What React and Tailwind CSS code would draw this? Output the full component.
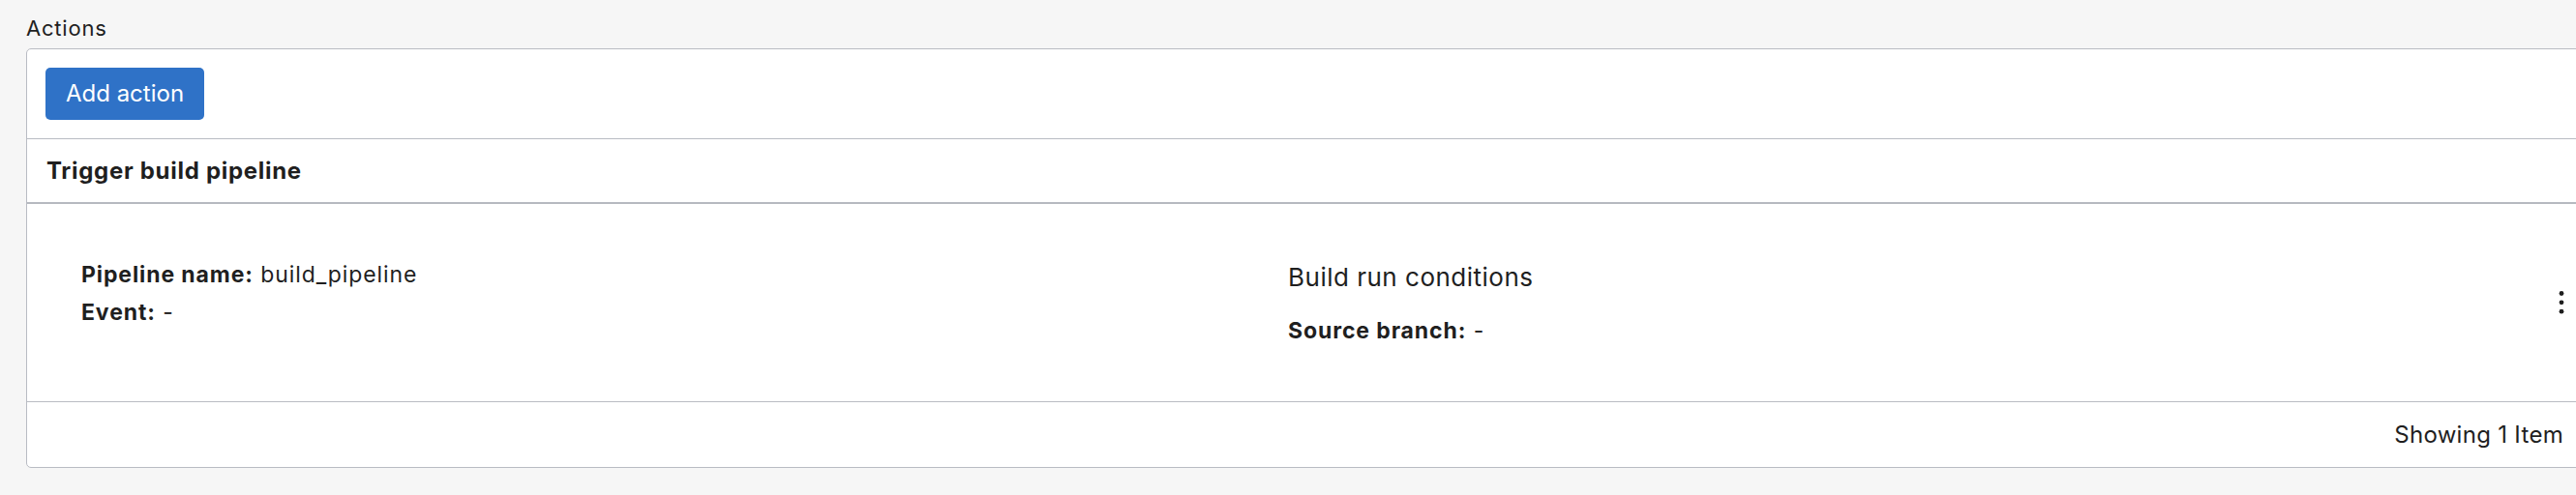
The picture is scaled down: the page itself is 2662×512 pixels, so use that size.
import React from "react";

const Kebab = () => (
  <svg width="6" height="26" viewBox="0 0 6 26" className="text-[#1f1f1f]">
    <circle cx="3" cy="3.5" r="2.4" fill="currentColor" />
    <circle cx="3" cy="12.8" r="2.4" fill="currentColor" />
    <circle cx="3" cy="22.2" r="2.4" fill="currentColor" />
  </svg>
);

const Field = ({ label, value, className = "" }) => (
  <div className={`leading-[33px] ${className}`}>
    <span className="font-bold">{label}</span> {value}
  </div>
);

export default function App() {
  return (
    <div
      className="h-[512px] w-full overflow-hidden bg-[#f6f6f6] pl-[27px] pt-[13px] text-[#1f1f1f]"
      style={{ fontFamily: "Inter, 'Noto Sans', sans-serif" }}
    >
      <div className="mb-[4px] text-[22px] leading-[33px] tracking-[0.8px]">Actions</div>

      <div className="w-[2642px] rounded-[5px] border border-[#b9bcc3] bg-white">
        {/* toolbar */}
        <div className="border-b border-[#b9bcc3] px-[19px] py-[19px]">
          <button className="h-[54px] w-[164px] rounded-[5px] bg-[#2f72c7] text-[24px] text-white">
            Add action
          </button>
        </div>

        {/* header */}
        <div className="flex h-[67px] items-center border-b-2 border-[#b6b9c0] px-[20px] text-[24px] font-bold tracking-[0.7px]">
          Trigger build pipeline
        </div>

        {/* row */}
        <div className="flex h-[205px] border-b border-[#b9bcc3] pl-[56px] pr-[18px] pt-[57px] text-[23px] tracking-[0.9px]">
          <div className="w-[1247px]">
            <Field label="Pipeline name:" value="build_pipeline" />
            <Field label="Event:" value="-" className="mt-[6px]" />
          </div>
          <div className="flex-1 pt-[2px]">
            <div className="text-[26px] leading-[33px] tracking-[0.5px]">Build run conditions</div>
            <Field label="Source branch:" value="-" className="mt-[23px]" />
          </div>
          <div className="-mt-[57px] flex items-center">
            <Kebab />
          </div>
        </div>

        {/* footer */}
        <div className="flex h-[67px] items-center justify-end pr-[19px] text-[24px] tracking-[0.3px]">
          Showing 1 Item
        </div>
      </div>
    </div>
  );
}
